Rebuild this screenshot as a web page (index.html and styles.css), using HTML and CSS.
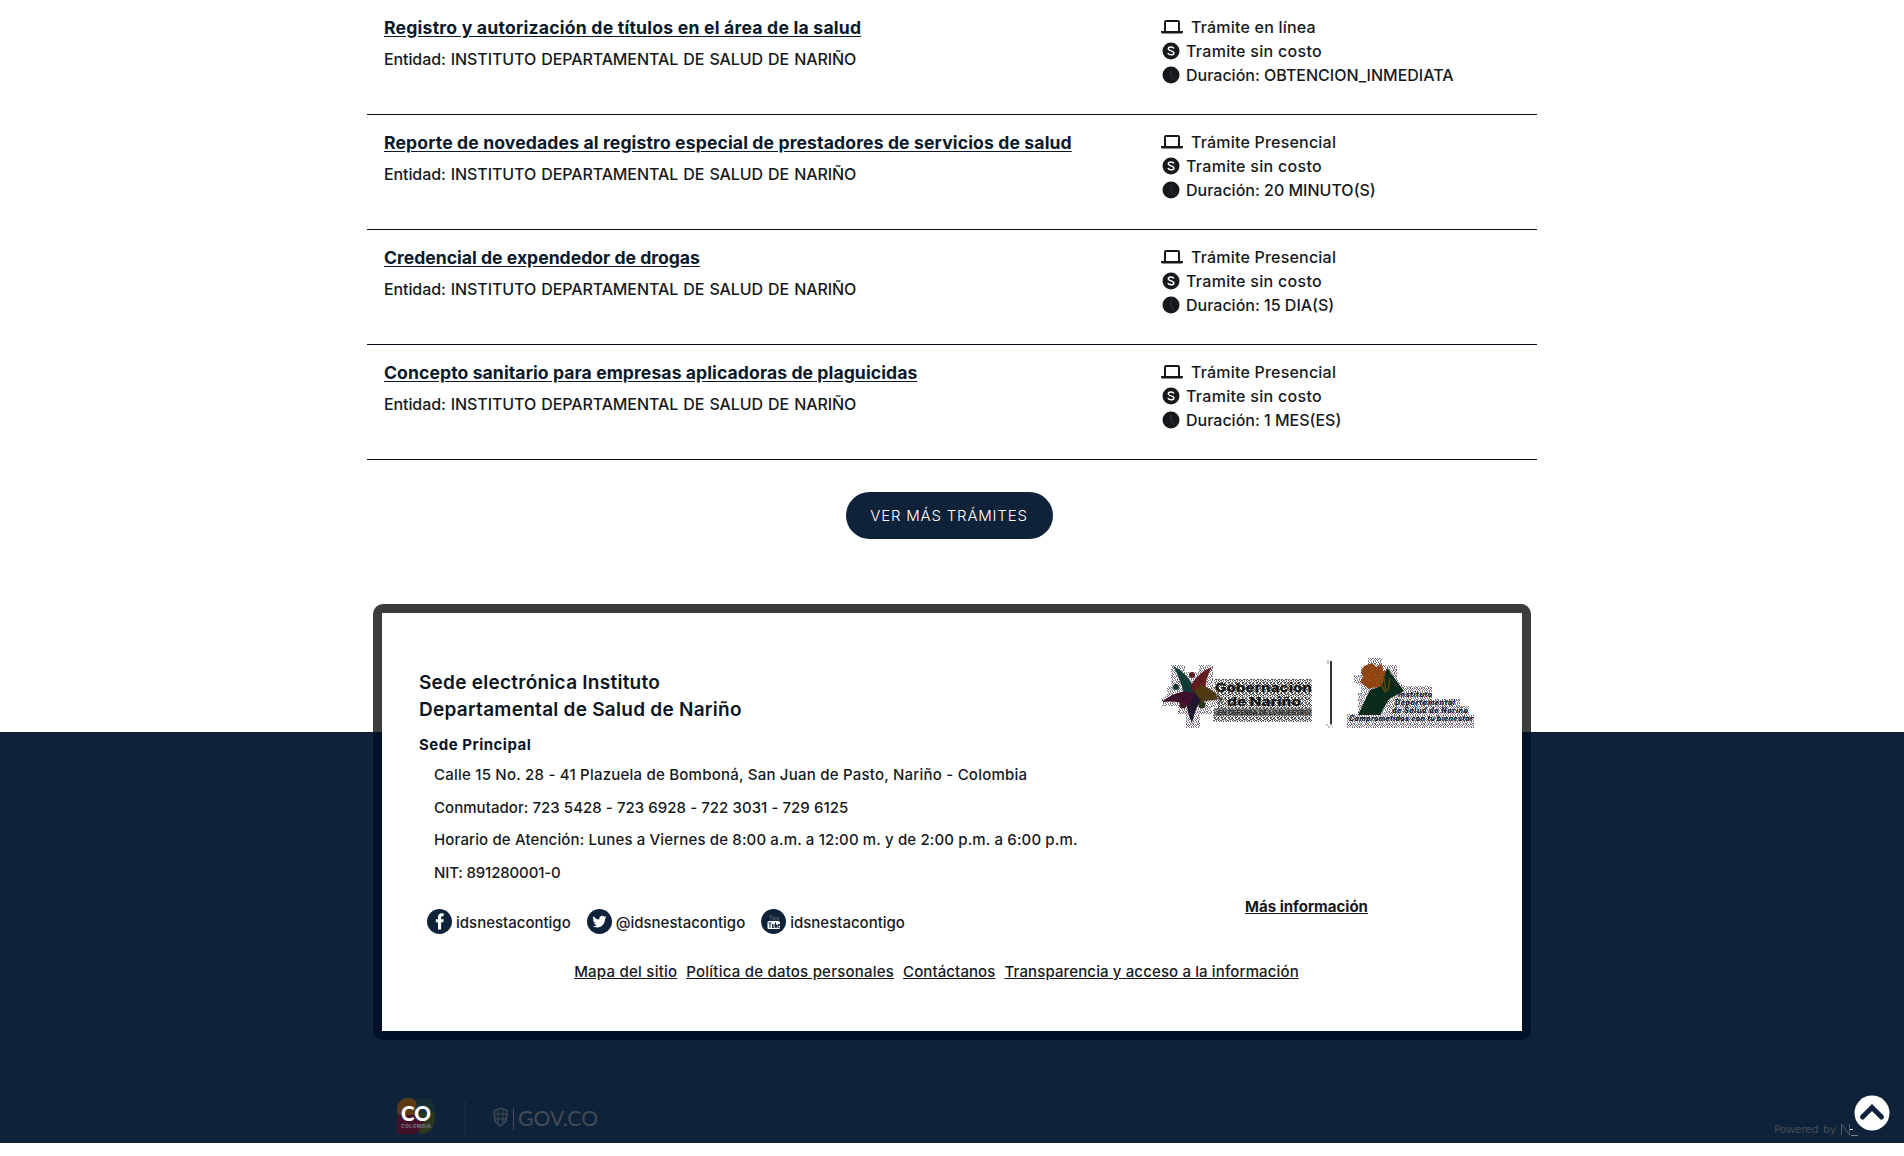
FILE: index.html
```html
<!DOCTYPE html>
<html lang="es">
<head>
<meta charset="utf-8">
<title>Trámites - Instituto Departamental de Salud de Nariño</title>
<link rel="stylesheet" href="styles.css">
</head>
<body>
<svg class="defs" width="0" height="0" aria-hidden="true">
  <symbol id="laptop" viewBox="0 0 22 16"><path fill="none" stroke="currentColor" stroke-width="2" d="M4 12V3q0-1 1-1h12q1 0 1 1v9"/><path fill="currentColor" d="M0 12h22v1q0 1.500-1.500 1.500h-19Q0 14.500 0 13z"/></symbol>
  <symbol id="cost" viewBox="0 0 18 18"><circle cx="9" cy="9" r="8.500" fill="currentColor"/><path fill="none" stroke="#fff" stroke-width="1.500" d="M12 6.500C11 4.300 6.300 4.300 6.300 6.800c0 2.600 5.600 1.500 5.600 4.200 0 2.500-5 2.500-6-.1"/></symbol>
  <symbol id="clock" viewBox="0 0 18 18"><circle cx="9" cy="9" r="8.500" fill="currentColor"/><path fill="none" stroke="#33383c" stroke-width="1" d="M9 4v6l3 4"/></symbol>
</svg>
<main class="list">
  <article class="row">
    <div class="info"><a class="name n1" href="#">Registro y autorización de títulos en el área de la salud</a><p class="entity">Entidad: INSTITUTO DEPARTAMENTAL DE SALUD DE NARIÑO</p></div>
    <ul class="meta"><li class="mode"><svg class="lap"><use href="#laptop"/></svg><span>Trámite en línea</span></li><li><svg class="dot"><use href="#cost"/></svg><span class="free">Tramite sin costo</span></li><li><svg class="dot"><use href="#clock"/></svg><span>Duración: OBTENCION_INMEDIATA</span></li></ul>
  </article>
  <article class="row">
    <div class="info"><a class="name n2" href="#">Reporte de novedades al registro especial de prestadores de servicios de salud</a><p class="entity">Entidad: INSTITUTO DEPARTAMENTAL DE SALUD DE NARIÑO</p></div>
    <ul class="meta"><li class="mode"><svg class="lap"><use href="#laptop"/></svg><span>Trámite Presencial</span></li><li><svg class="dot"><use href="#cost"/></svg><span class="free">Tramite sin costo</span></li><li><svg class="dot"><use href="#clock"/></svg><span>Duración: 20 MINUTO(S)</span></li></ul>
  </article>
  <article class="row">
    <div class="info"><a class="name n3" href="#">Credencial de expendedor de drogas</a><p class="entity">Entidad: INSTITUTO DEPARTAMENTAL DE SALUD DE NARIÑO</p></div>
    <ul class="meta"><li class="mode"><svg class="lap"><use href="#laptop"/></svg><span>Trámite Presencial</span></li><li><svg class="dot"><use href="#cost"/></svg><span class="free">Tramite sin costo</span></li><li><svg class="dot"><use href="#clock"/></svg><span>Duración: 15 DIA(S)</span></li></ul>
  </article>
  <article class="row">
    <div class="info"><a class="name n4" href="#">Concepto sanitario para empresas aplicadoras de plaguicidas</a><p class="entity">Entidad: INSTITUTO DEPARTAMENTAL DE SALUD DE NARIÑO</p></div>
    <ul class="meta"><li class="mode"><svg class="lap"><use href="#laptop"/></svg><span>Trámite Presencial</span></li><li><svg class="dot"><use href="#cost"/></svg><span class="free">Tramite sin costo</span></li><li><svg class="dot"><use href="#clock"/></svg><span>Duración: 1 MES(ES)</span></li></ul>
  </article>
</main>
<a class="more" href="#"><span>VER MÁS TRÁMITES</span></a>
<footer class="footer">
  <div class="frame"><div class="card">
    <div class="top">
      <section class="contact">
        <h2>Sede electrónica Instituto<br>Departamental de Salud de Nariño</h2>
        <h3>Sede Principal</h3>
        <p class="address">Calle 15 No. 28 - 41 Plazuela de Bomboná, San Juan de Pasto, Nariño - Colombia</p>
        <p class="phones">Conmutador: 723 5428 - 723 6928 - 722 3031 - 729 6125</p>
        <p class="hours">Horario de Atención: Lunes a Viernes de 8:00 a.m. a 12:00 m. y de 2:00 p.m. a 6:00 p.m.</p>
        <p class="nit">NIT: 891280001-0</p>
        <div class="social">
          <a href="#"><svg width="25" height="25" viewBox="0 0 25 25"><circle cx="12.500" cy="12.500" r="12.500" fill="#0e2339"/><path fill="#fff" d="M11 20.500v-7.300H8.800v-3H11V8.300c0-2.600 1.400-4 3.700-4h2v3h-1.300c-1 0-1.300.5-1.300 1.300v1.600h2.600l-.4 3h-2.200v7.300z"/></svg><span>idsnestacontigo</span></a>
          <a href="#"><svg width="25" height="25" viewBox="0 0 25 25"><circle cx="12.500" cy="12.500" r="12.500" fill="#0e2339"/><path fill="#fff" d="M19.500 8.200q-.8.400-1.600.5.900-.6 1.200-1.600-.8.500-1.800.7a2.900 2.900 0 0 0-5 2.600Q8.700 10.200 6.400 7.400a2.900 2.900 0 0 0 .9 3.900q-.7 0-1.300-.4 0 2.200 2.300 2.900-.6.200-1.300.1.600 1.900 2.700 2-1.800 1.400-4.200 1.200c6.300 3.800 12.600-.6 12.500-7.300q.9-.6 1.500-1.600z"/></svg><span>@idsnestacontigo</span></a>
          <a href="#"><svg width="25" height="25" viewBox="0 0 25 25"><circle cx="12.500" cy="12.500" r="12.500" fill="#0e2339"/><path stroke="#4a5561" fill="none" d="M8.500 6l1.500 2.500L11.500 6M10 8.500V11M12.500 8h1.500v3h-1.500zM16 8v3h1.500V8"/><rect x="6.500" y="12" width="12.500" height="8" rx="1.500" fill="#fff"/><path stroke="#0e2339" fill="none" d="M7.500 14h3M9 14v5M11.500 15v3.500h1.500V15M14.500 13.500v5h1V15.500M17 16.500h1.500V15.500H17v3h1.500"/></svg><span>idsnestacontigo</span></a>
        </div>
      </section>
      <aside class="side">
        <svg class="logos" width="320" height="74" viewBox="0 0 320 74">
          <defs>
            <pattern id="grain" width="7" height="5" patternUnits="userSpaceOnUse"><path stroke="#4a4a4a" d="M0 .5h1M3 .5h2M1 1.500h2M5 1.500h1M0 2.500h1M4 2.500h1M6 2.500h1M2 3.500h1M5 3.500h1M0 4.500h2M4 4.500h1"/><path stroke="#aaa" d="M1 .5h1M3 1.500h2M2 2.500h1M0 3.500h1M3 4.500h1M6 4.500h1"/></pattern>
            <pattern id="speck" width="7" height="6" patternUnits="userSpaceOnUse"><path stroke="#666" d="M0 .5h1M4 .5h1M2 2.500h1M5 3.500h1M1 4.500h1M6 5.500h1"/><path stroke="#7d62a5" d="M2 .5h1M6 1.500h1M0 3.500h1M4 5.500h1M3 1.500h1"/><path stroke="#609a68" d="M1 1.500h1M5 2.500h1M3 4.500h1M0 5.500h1"/><path stroke="#c98aa8" d="M5 .5h1M0 2.500h1M3 3.500h1M5 4.500h1"/></pattern>
          </defs>
          <path fill="url(#speck)" d="M13 7h14v7h14V7h14v21h5v13h5v8H54v7H42v14H28V56H20V48H4v-7l5-4V28h4z"/>
          <path fill="#0f3a38" d="M15 8q13 6 20 20v10l-9-2q-4-16-11-28z"/><path fill="#641b1e" d="M54 9Q41 14 33 27l3 10 11-3q0-14 7-25z"/><path fill="#4f3a12" d="M65 42Q54 30 43 27l-9 8 7 10q12-4 24-3z"/><path fill="#211630" d="M34 65q-6-11-5-25l7-6 7 8q-6 9-9 23z"/><path fill="#3f102e" d="M4 44q10-9 24-11l9 3-6 12q-11-6-27-4z"/>
          <circle cx="34" cy="17" r="3" fill="#5a1c22"/><circle cx="18" cy="29" r="3" fill="#15332f"/><circle cx="25" cy="47" r="3.500" fill="#461722"/><circle cx="44" cy="47" r="3.500" fill="#263818"/>
          <path fill="url(#grain)" d="M56 21h98v43H55V50h5z"/><path fill="#555" opacity=".5" d="M56 50h98v8H56z"/>
          <text class="gov" x="57" y="34" textLength="97" lengthAdjust="spacingAndGlyphs">Gobernación</text><text class="gov" x="69" y="48" textLength="74" lengthAdjust="spacingAndGlyphs">de Nariño</text>
          <text class="motto" x="58" y="57" textLength="95" lengthAdjust="spacingAndGlyphs">¡EN DEFENSA DE LO NUESTRO!</text>
          <path stroke="#333" stroke-width="2" d="M173 3v63"/><path stroke="#888" stroke-dasharray="2 2" d="M169 3h5M169 5h3M168 67h7M170 69h5"/>
          <path fill="url(#speck)" d="M210 0h14v7h15v14l7 7h28v13h28v7h9v9h5v13H189V56h11V35h3v-7l-7-4v-7h7v-8h7z"/>
          <path fill="#8f4512" d="m206 8 8-3 4 4 6-3 1 7 7-1-1 9 2 6-9 5-7-3-6 2-9-7 3-5-2-5z"/><path stroke="#c06c22" stroke-dasharray="1 2" fill="none" d="m205 12 19 14M211 7l12 20M222 8l2 19M232 15l-9 12M205 18l18 10"/>
          <path fill="#082b1c" d="m200 57 12-25 12-4 5-18 17 23-15 8-9 16z"/><path stroke="#5a4a14" stroke-width="1.500" fill="none" d="m221 22 6 12M226 20l2 14M232 20l-2 13"/>
          <text class="ids" x="240" y="39" textLength="34">Instituto</text><text class="ids" x="237" y="47" textLength="60">Departamental</text><text class="ids" x="234" y="55" textLength="76">de Salud de Nariño</text><text class="ids" x="191" y="63" textLength="124">Comprometidos con tu bienestar</text>
        </svg>
        <a class="info-link" href="#">Más información</a>
      </aside>
    </div>
    <nav class="links"><a class="l1" href="#">Mapa del sitio</a><a class="l2" href="#">Política de datos personales</a><a class="l3" href="#">Contáctanos</a><a class="l4" href="#">Transparencia y acceso a la información</a></nav>
  </div></div>
  <div class="brand">
    <svg width="210" height="40" viewBox="0 0 210 40">
      <path fill="#44103a" d="M1 17h20v20H1z"/><circle cx="12" cy="12" r="11" fill="#5e3a14"/><path fill="#152f36" d="M20 2h15q5 7 5 15l-8 5-12-5z"/><path fill="#2c3720" d="M21 16h18q1 21-15 21l-4-6z"/><path fill="#451128" d="M1 18h22l5 8-8 11H1z"/>
      <text class="co" x="5" y="24" textLength="30" lengthAdjust="spacingAndGlyphs">CO</text><text class="colombia" x="5" y="31" textLength="30">COLOMBIA</text>
      <path stroke="#1d3045" d="M69.500 3v36"/>
      <g fill="none" stroke="#454c57"><path stroke-width="1.500" d="M98 15q0-3 3-2 4-3 7 0 3-1 3 2l-1 9-6 5-5-5z"/><path d="M99 17h11M99 22h11M102 14v12M107 14v12"/><path d="M117.500 11v22"/></g>
      <text class="govco" x="122" y="29" textLength="80">GOV.CO</text>
    </svg>
    <span class="powered">Powered <i>by</i></span>
    <svg class="nexura" width="20" height="14" viewBox="0 0 20 14"><path fill="none" stroke="#555c67" d="M1.500 12V1l8 11V1"/><path stroke="#7d838c" d="M11 12.500h7"/><path stroke="#fff" d="M10 6.500h3"/></svg>
  </div>
</footer>
<a class="to-top" href="#" aria-label="Subir"><svg width="36" height="36" viewBox="0 0 36 36"><circle cx="18" cy="18" r="17.500" fill="#fff"/><path d="M8.500 22 18 12.500 27.500 22" fill="none" stroke="#0e2339" stroke-width="5" stroke-linecap="round"/></svg></a>
</body>
</html>
```
FILE: styles.css
```css
* { box-sizing: border-box; }
body { margin: 0; background: #fff; color: #16191c; font: 500 16px/24px Inter, sans-serif; overflow: hidden; }
a { color: inherit; }
p, h2, h3, ul { margin: 0; padding: 0; }
.defs { display: block; height: 0; }

.list { width: 1170px; margin: 0 auto; }
.row { height: 115px; padding: 15px 17px 0; border-bottom: 1px solid #06101c; display: grid; grid-template-columns: 777px 1fr; }
.info { padding-top: 1px; }
.name { display: inline-block; font-size: 17.600px; font-weight: 700; color: #0b1a2b; text-underline-offset: 2px; white-space: nowrap; }
.n1 { letter-spacing: .22px; }
.n2 { letter-spacing: .12px; }
.n3 { letter-spacing: 0; }
.n4 { letter-spacing: .08px; }
.entity { margin-top: 7px; letter-spacing: -.1px; word-spacing: 1px; }
.meta { list-style: none; }
.meta li { display: flex; height: 24px; align-items: center; gap: 6px; padding-left: 1px; white-space: nowrap; }
.meta .mode { padding-left: 0; gap: 8px; letter-spacing: .2px; }
.free { letter-spacing: .3px; }
.lap { width: 22px; height: 16px; }
.dot { width: 18px; height: 18px; }

.more { display: flex; align-items: center; justify-content: center; width: 207px; height: 47px; margin: 32px auto 0; position: relative; left: -3px; border-radius: 24px; background: #0e2339; color: #fff; text-decoration: none; font: 300 15px Inter, sans-serif; letter-spacing: .8px; }

.footer { height: 540px; margin-top: 64px; padding-top: 1px; background: linear-gradient(#fff 129px, #0e2339 129px); }
.frame { width: 1158px; height: 436px; margin: 0 auto; padding: 9px; border-radius: 10px; background: linear-gradient(#3c3c3c 128px, #001228 128px); }
.card { height: 418px; background: #fff; }
.top { display: grid; grid-template-columns: 772px 1fr; height: 347px; }
.contact { padding: 56px 0 0 37px; }
h2 { font: 600 19px/27px Inter, sans-serif; color: #0c151f; letter-spacing: .26px; }
h3 { font: 700 15px/24px Inter, sans-serif; color: #0c151f; margin: 10px 0 6px; letter-spacing: .5px; }
.contact p { padding-left: 15px; font-size: 15px; line-height: 24px; margin-bottom: 8.700px; white-space: nowrap; }
.contact .address { letter-spacing: .22px; }
.contact .phones { letter-spacing: .05px; }
.contact .hours { letter-spacing: .14px; }
.contact .nit { letter-spacing: -.15px; }
.social { display: flex; gap: 16px; padding: 15px 0 0 8px; font-size: 15px; }
.social a { display: flex; gap: 4px; text-decoration: none; }
.social span { padding-top: 2px; }
.side { display: flex; flex-direction: column; align-items: flex-start; padding-top: 45px; }
.logos { margin-left: 4px; }
.info-link { margin: 163px 0 0 91px; font-size: 15px; font-weight: 700; }
.gov { font: 800 12px Inter, sans-serif; fill: #151515; }
.motto { font: 700 6px Inter, sans-serif; fill: #222; }
.ids { font: italic 800 7px Inter, sans-serif; fill: #08152e; }
.links { display: flex; justify-content: center; gap: 9px; padding-right: 31px; font-size: 15px; }
.l1 { letter-spacing: .24px; }
.l2 { letter-spacing: .22px; }
.l3 { letter-spacing: .1px; }
.l4 { letter-spacing: .13px; }

.brand { height: 101px; display: flex; padding: 57px 0 0 396px; color: #454c58; }
.co { font: 900 20px Lato, sans-serif; fill: #fff; }
.colombia { font: 700 5px Inter, sans-serif; fill: #747985; }
.govco { font: 400 21px Lato, sans-serif; fill: #454a54; }
.powered { margin: 22px 0 0 1168px; font: 11px/22px "DejaVu Sans", sans-serif; letter-spacing: -.4px; white-space: nowrap; }
.powered i { font-style: normal; margin-left: 2px; }
.nexura { margin: 26px 0 0 4px; }
.to-top { position: fixed; left: 1854px; top: 1095px; line-height: 0; }
```
